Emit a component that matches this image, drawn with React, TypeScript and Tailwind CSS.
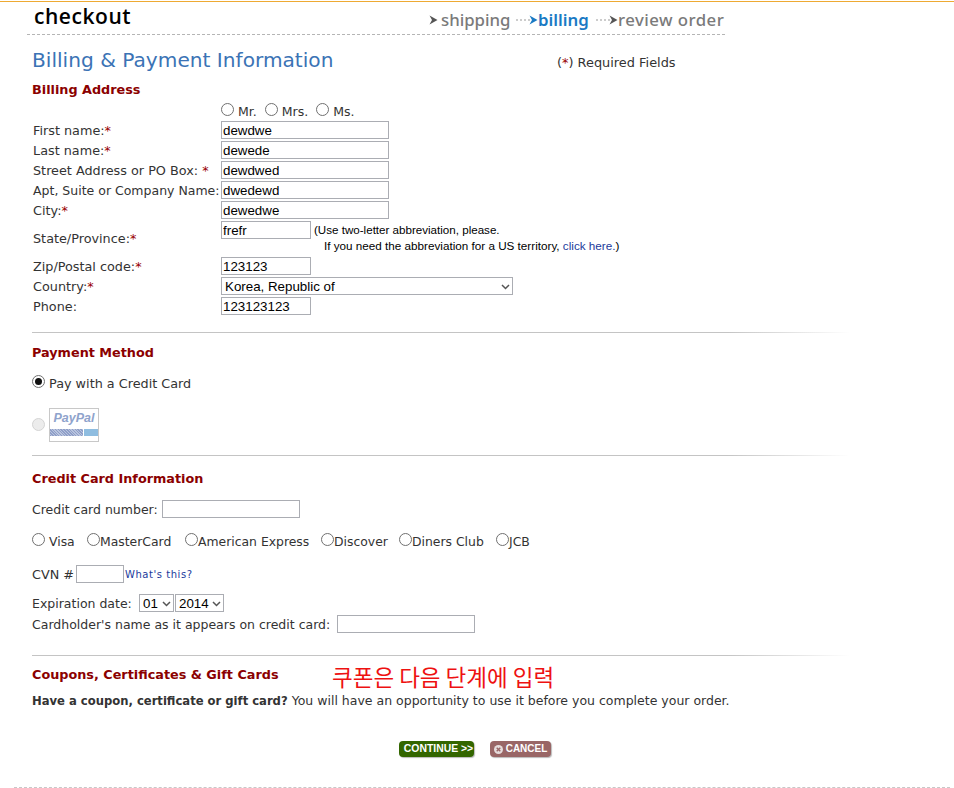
import React from 'react';

const verdana = 'font-["DejaVu_Sans",Verdana,sans-serif]';
const fieldClass =
  'h-[18px] border border-[#abadb3] bg-white px-[1px] font-["Liberation_Sans",Arial,sans-serif] text-[13.33px] leading-[16px] text-black outline-none';

const Star: React.FC = () => <span className="text-[#990000]">*</span>;

const Radio: React.FC<{ checked?: boolean; disabled?: boolean }> = ({ checked, disabled }) => (
  <span
    className={`inline-flex h-[13px] w-[13px] shrink-0 items-center justify-center rounded-full border ${
      disabled ? 'border-[#d4d4d4] bg-[#ececec]' : 'border-[#707070] bg-white'
    }`}
  >
    {checked && <span className="h-[7px] w-[7px] rounded-full bg-[#111]" />}
  </span>
);

const Row: React.FC<{ label: React.ReactNode; children: React.ReactNode }> = ({ label, children }) => (
  <div className="flex h-5 items-center pl-px">
    <div className="w-[188px] shrink-0 whitespace-nowrap pt-px">{label}</div>
    {children}
  </div>
);

const Divider: React.FC = () => (
  <div className="h-px w-[818px] bg-gradient-to-r from-[#c4c4c4] from-85% to-white" />
);

const Heading: React.FC<{ children: React.ReactNode }> = ({ children }) => (
  <h2 className="whitespace-nowrap text-[12.8px] font-bold leading-4 text-[#8b0000]">{children}</h2>
);

const StepArrow: React.FC<{ color: string; dotted?: boolean }> = ({ color, dotted }) => (
  <svg width={dotted ? 22 : 9} height="10" viewBox={dotted ? '0 0 22 10' : '0 0 9 10'} className="shrink-0">
    {dotted && <path d="M0 5h14" stroke="#999" strokeDasharray="2 2" />}
    <path
      transform={dotted ? 'translate(13 0)' : undefined}
      d="M0.5 0.5L8.5 5L0.5 9.5L3 5Z"
      fill={color}
    />
  </svg>
);

// plain select with the small grey chevron from the picture
const Select: React.FC<{ value: string; label: string; width: string }> = ({ value, label, width }) => (
  <div className={`relative h-[18px] ${width}`}>
    <select
      defaultValue={value}
      className='h-[18px] w-full appearance-none border border-[#abadb3] bg-white pl-[3px] pt-px font-["Liberation_Sans",Arial,sans-serif] text-[13.33px] leading-[16px] text-black outline-none'
    >
      <option value={value}>{label}</option>
    </select>
    <svg width="9" height="6" viewBox="0 0 9 6" className="pointer-events-none absolute right-[3px] top-[7px]">
      <path d="M1 1l3.5 3.5L8 1" fill="none" stroke="#555" strokeWidth="1.5" />
    </svg>
  </div>
);

const cards = [
  { name: 'Visa', gap: 'gap-[4px]', width: 'w-[55px]' },
  { name: 'MasterCard', gap: 'gap-0', width: 'w-[98px]' },
  { name: 'American Express', gap: 'gap-0', width: 'w-[136px]' },
  { name: 'Discover', gap: 'gap-0', width: 'w-[78px]' },
  { name: 'Diners Club', gap: 'gap-0', width: 'w-[97px]' },
  { name: 'JCB', gap: 'gap-0', width: 'w-[40px]' },
];

export default function App() {
  return (
    <div className={`relative h-[788px] w-[954px] overflow-hidden bg-white text-[12.8px] leading-4 text-[#333] ${verdana}`}>
      <div className="h-px mt-px bg-[#eeaa33]" />

      <header className="ml-[27px] flex h-[33px] w-[698px] items-start justify-between border-b border-dashed border-[#b5b5b5]">
        <div className="ml-[7px] font-['Open_Sans',sans-serif] text-[21px] font-semibold leading-[28px] tracking-[0.55px] text-black">
          checkout
        </div>
        <div className="mt-[5px] flex items-center font-['Noto_Sans',sans-serif] text-[16.8px] font-medium leading-[26px] text-[#7a7a7a]">
          <StepArrow color="#555" />
          <span className="ml-[3px] w-[69px] whitespace-nowrap">shipping</span>
          <span className="ml-[6px]">
            <StepArrow color="#1a7ac4" dotted />
          </span>
          <span className="w-[50px] font-semibold text-[#1a7ac4]">billing</span>
          <span className="ml-[8px]">
            <StepArrow color="#555" dotted />
          </span>
          <span className="w-[107px] whitespace-nowrap tracking-[0.45px]">review order</span>
        </div>
      </header>

      <main className="pl-[32px]">
        <div className="mt-[11px] flex h-[28px] items-center">
          <h1 className="w-[525px] text-[20.15px] leading-[28px] text-[#3b73b5]">Billing &amp; Payment Information</h1>
          <div className="mt-[5px] text-[12.9px]">
            (<Star />) Required Fields
          </div>
        </div>

        <div className="mt-[8px]">
          <Heading>Billing Address</Heading>
        </div>

        <div className="mt-[5px] flex h-[16px] items-start gap-[4px] pl-[189px] text-[12.5px]">
          <Radio />
          <span className="mr-[4px] pt-px">Mr.</span>
          <Radio />
          <span className="mr-[4px] pt-px">Mrs.</span>
          <Radio />
          <span className="pt-px">Ms.</span>
        </div>

        <div className="mt-px">
          <Row label={<>First name:<Star /></>}>
            <input readOnly value="dewdwe" className={`${fieldClass} w-[168px]`} />
          </Row>
          <Row label={<>Last name:<Star /></>}>
            <input readOnly value="dewede" className={`${fieldClass} w-[168px]`} />
          </Row>
          <Row label={<>Street Address or PO Box: <Star /></>}>
            <input readOnly value="dewdwed" className={`${fieldClass} w-[168px]`} />
          </Row>
          <Row label={<span className="text-[12.5px]">Apt, Suite or Company Name:</span>}>
            <input readOnly value="dwedewd" className={`${fieldClass} w-[168px]`} />
          </Row>
          <Row label={<>City:<Star /></>}>
            <input readOnly value="dewedwe" className={`${fieldClass} w-[168px]`} />
          </Row>

          <div className="flex h-[36px] pl-px">
            <div className="w-[188px] shrink-0 pt-[11px]">
              State/Province:<Star />
            </div>
            <div className="relative pt-px">
              <input readOnly value="frefr" className={`${fieldClass} w-[90px]`} />
              <div className="absolute left-[93px] top-[2px] w-[330px] font-['Liberation_Sans',Arial,sans-serif] text-[11.6px] leading-4 text-black">
                (Use two-letter abbreviation, please.
                <div className="ml-[10px] text-[11.7px]">
                  If you need the abbreviation for a US territory, <span className="text-[#1a3a9c]">click here.</span>)
                </div>
              </div>
            </div>
          </div>

          <Row label={<>Zip/Postal code:<Star /></>}>
            <input readOnly value="123123" className={`${fieldClass} w-[90px]`} />
          </Row>
          <Row label={<>Country:<Star /></>}>
            <Select value="KR" label="Korea, Republic of" width="w-[292px]" />
          </Row>
          <Row label="Phone:">
            <input readOnly value="123123123" className={`${fieldClass} w-[90px]`} />
          </Row>
        </div>

        <div className="mt-[16px]">
          <Divider />
        </div>

        <div className="mt-[12px]">
          <Heading>Payment Method</Heading>
        </div>
        <div className="mt-[15px] flex items-start gap-[4px]">
          <span className="-mt-px flex">
            <Radio checked />
          </span>
          <span>Pay with a Credit Card</span>
        </div>
        <div className="mt-[16px] flex items-center gap-[4px]">
          <span className="mb-[2px] flex">
            <Radio disabled />
          </span>
          <div className="h-[34px] w-[50px] border border-[#c8c8c8] bg-white">
            <div className="mt-[1px] text-center font-['Liberation_Sans',Arial,sans-serif] text-[12.5px] font-bold italic leading-[16px] text-[#8fa3cc]">
              PayPal
            </div>
            <div className="mt-[3px] flex gap-px">
              <div className="h-[7px] w-[33px] bg-[repeating-linear-gradient(45deg,#8f9fc8_0px,#8f9fc8_1px,#b9c4de_1px,#b9c4de_2px)]" />
              <div className="h-[7px] w-[14px] bg-[#8fbde0]" />
            </div>
          </div>
        </div>

        <div className="mt-[13px]">
          <Divider />
        </div>

        <div className="mt-[15px]">
          <Heading>Credit Card Information</Heading>
        </div>
        <div className="mt-[13px] flex h-[18px] items-center">
          <span className="w-[130px] whitespace-nowrap pt-px text-[12.5px]">Credit card number:</span>
          <input readOnly className={`${fieldClass} w-[138px]`} />
        </div>

        <div className="mt-[15px] flex h-[16px] items-start text-[12.4px]">
          {cards.map((card) => (
            <div key={card.name} className={`flex items-start whitespace-nowrap ${card.gap} ${card.width}`}>
              <Radio />
              <span className="pt-px">{card.name}</span>
            </div>
          ))}
        </div>

        <div className="mt-[16px] flex h-[18px] items-center">
          <span className="w-[44px] whitespace-nowrap pt-px">CVN #</span>
          <input readOnly className={`${fieldClass} w-[48px]`} />
          <span className="ml-px pt-px text-[10px] tracking-[0.55px] text-[#1a3a9c]">What&apos;s this?</span>
        </div>

        <div className="mt-[11px] flex h-[18px] items-center">
          <span className="w-[107px] whitespace-nowrap pt-px text-[12.5px]">Expiration date:</span>
          <div className="mr-px">
            <Select value="01" label="01" width="w-[35px]" />
          </div>
          <Select value="2014" label="2014" width="w-[49px]" />
        </div>
        <div className="mt-[3px] flex h-[18px] items-center">
          <span className="w-[305px] whitespace-nowrap pt-px text-[12.5px]">Cardholder&apos;s name as it appears on credit card:</span>
          <input readOnly className={`${fieldClass} w-[138px]`} />
        </div>

        <div className="mt-[22px]">
          <Divider />
        </div>

        <div className="mt-[11px] flex h-[24px] items-start">
          <div className="w-[300px]">
            <Heading>Coupons, Certificates &amp; Gift Cards</Heading>
          </div>
          <div className="-mt-[3px] whitespace-nowrap font-['Noto_Sans_CJK_KR',sans-serif] text-[22.5px] leading-[24px] text-[#ee1111]">
            쿠폰은 다음 단계에 입력
          </div>
        </div>
        <p className="mt-[2px] whitespace-nowrap leading-4">
          <b className="text-[11.6px] font-bold">Have a coupon, certificate or gift card?</b>{' '}
          <span className="text-[12.5px]">You will have an opportunity to use it before you complete your order.</span>
        </p>

        <div className="mt-[32px] flex items-center pl-[367px]">
          <button
            type="button"
            className="h-[16px] w-[75px] rounded-[4px] bg-[#336600] pl-[4px] text-center font-['Liberation_Sans',Arial,sans-serif] text-[10.4px] font-bold leading-[16px] text-white shadow-[1px_1px_1px_#bbb]"
          >
            CONTINUE &gt;&gt;
          </button>
          <button
            type="button"
            className="ml-[16px] flex h-[16px] w-[61px] items-center justify-center gap-[3px] rounded-[4px] bg-[#996666] font-['Liberation_Sans',Arial,sans-serif] text-[10px] font-bold leading-[16px] text-white shadow-[1px_1px_1px_#bbb]"
          >
            <svg width="9" height="9" viewBox="0 0 9 9">
              <circle cx="4.5" cy="4.5" r="4.5" fill="#e6dcdc" />
              <path d="M2.7 2.7l3.6 3.6M6.3 2.7l-3.6 3.6" stroke="#996666" strokeWidth="1.4" />
            </svg>
            CANCEL
          </button>
        </div>
      </main>

      <div className="absolute bottom-0 left-[14px] w-[936px] border-b border-dashed border-[#c8c8c8]" />
    </div>
  );
}
